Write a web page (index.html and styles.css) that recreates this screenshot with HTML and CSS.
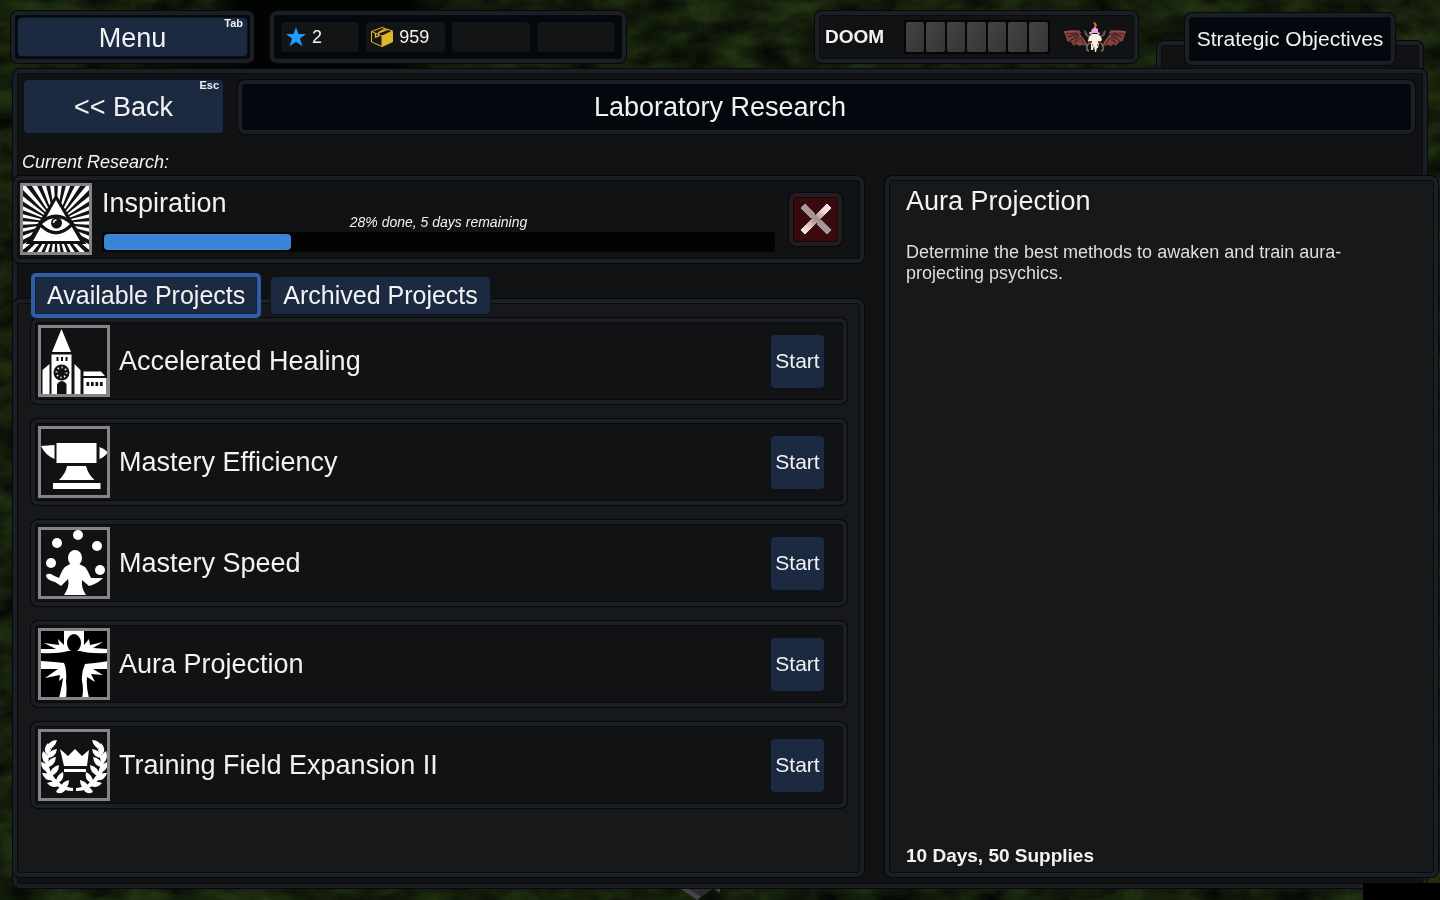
FILE: index.html
```html
<!DOCTYPE html>
<html lang="en">
<head>
<meta charset="utf-8">
<title>Laboratory Research</title>
<link rel="stylesheet" href="styles.css">
</head>
<body>
<svg class="terrain" aria-hidden="true">
  <filter id="moss" x="0" y="0" width="100%" height="100%" color-interpolation-filters="sRGB">
    <feTurbulence type="fractalNoise" baseFrequency="0.025 0.045" numOctaves="6" seed="8"/>
    <feColorMatrix values="0.18 0 0 0 -0.010  0.26 0.04 0 0 -0.030  0.08 0 0 0 0.005  0 0 0 0 1"/>
  </filter>
  <rect width="100%" height="100%" filter="url(#moss)"/>
</svg>
<div class="shade"></div>
<div class="map-corner"></div>
<svg class="map-arrow" viewBox="0 0 40 12" aria-hidden="true"><path d="M0 0h34L17 12z" fill="#2c2c2e"/><path d="M0 0l17 12 4-3L8 0zM33 0h7v5z" fill="#444448"/></svg>

<div class="screen">
  <header class="topbar">
    <nav class="panel deep menu"><button class="btn menu-btn">Menu<kbd>Tab</kbd></button></nav>
    <ul class="panel deep resources">
      <li><svg class="star" viewBox="0 0 20 20"><path d="M10 0l2.400 7H20l-6 4.600 2.300 7.700-6.300-4.600-6.300 4.600L6 11.600 0 7h7.600z" fill="#1e9bff"/></svg>2</li>
      <li><svg class="crate" viewBox="0 0 22 20"><path d="M11 9l11-5v11l-11 5z" fill="#e0b72a"/><path d="M.5 4.500L11 .5l10.500 3.500L11 9zM.5 4.500v10.500l10.500 4.500V9" fill="#151617" stroke="#e0b72a"/><path d="M4.500 6v4l3-1V6L17 2.500M7.500 5.500L14 2" fill="none" stroke="#e0b72a" stroke-width="1.300"/></svg>959</li>
      <li></li>
      <li></li>
    </ul>
    <section class="panel doom">
      <strong>DOOM</strong>
      <div class="segments"><i></i><i></i><i></i><i></i><i></i><i></i><i></i></div>
      <svg class="demon" viewBox="0 0 62 32" aria-hidden="true">
        <g id="wing"><path d="M0 11l6-1 6 0 5 1-1 3 4 5 3 6-5-1-3 1-3-2-2 2-3-4-4-1-1-4z" fill="#81443f"/><path d="M2 13l11-1-9 4 11-3-9 7 9-5-5 7 7-5 3 6" fill="none" stroke="#3b191a" stroke-width=".8"/><path d="M0 11l6-1h10M16 14l4 5 3 5" fill="none" stroke="#a85b54"/><path d="M20 9l1 5 4 3 3-2-4-1-2-4z" fill="#665347"/><path d="M25 22l-2 3 0 4 2 1" fill="none" stroke="#777064" stroke-width="1.600"/></g>
        <use href="#wing" transform="matrix(-1 0 0 1 62 0)"/>
        <path d="M25 16l3-3h6l3 3 1 3-3 3-1 5h-1l-1 4h-1l-1-6-1 4h-2v-6l-3-3z" fill="#f4f0e3"/>
        <path d="M28 23l1 0 0 3zM33 23h1l-1 3z" fill="#5b4742"/>
        <path d="M25 20h3v2h-3zM34 20h3v2h-3z" fill="#b81822"/>
        <path d="M25 11l2 0 1-3 2-1 1-3 1 3 2 1 0 3 2 1-1 2-2-2h-4l-3 2z" fill="#efa8df"/>
        <path d="M29 2l2-1 1 2 1 1-1 2-1-1-1-2z" fill="#ef6d28"/>
      </svg>
    </section>
    <div class="panel drawer"><button class="panel deep objectives">Strategic Objectives</button></div>
  </header>

  <main class="panel lab">
    <div class="heading">
      <button class="btn back-btn">&lt;&lt; Back<kbd>Esc</kbd></button>
      <h1 class="panel deep">Laboratory Research</h1>
    </div>
    <p class="caption">Current Research:</p>

    <div class="columns">
      <div class="left">
        <section class="panel current">
          <svg class="icon" viewBox="0 0 66 66" aria-hidden="true">
            <circle cx="33" cy="37" r="30" pathLength="60" fill="none" stroke="#fff" stroke-width="60" stroke-dasharray="1 1" stroke-dashoffset=".5"/>
            <path d="M33 14L8 55h50z" fill="#101214" stroke="#101214" stroke-width="6"/>
            <path d="M33 14L10 55h47z" fill="#fff"/>
            <path d="M17 38q16-15 32 0q-16 17-32 0z" fill="#fff" stroke="#101214" stroke-width="4"/>
            <path d="M19 38q14-12 28 0q-14 14-28 0z" fill="#fff"/>
            <circle cx="33.500" cy="37" r="5.500" fill="#101214"/><path d="M30.500 37q0-3 3-3" fill="none" stroke="#fff" stroke-width="1.300"/>
          </svg>
          <div class="status">
            <h2>Inspiration</h2>
            <label for="research-progress">28% done, 5 days remaining</label>
            <progress id="research-progress" value="28" max="100"></progress>
          </div>
          <button class="panel cancel" aria-label="Cancel research">
            <svg viewBox="0 0 34 34"><defs><linearGradient id="shine" x1="1" y1="0" x2="0" y2="1"><stop offset="0" stop-color="#ffe8e6"/><stop offset=".25" stop-color="#f3d9d7"/><stop offset=".5" stop-color="#a08b8b"/><stop offset=".75" stop-color="#ecd0ce"/><stop offset="1" stop-color="#fff0ee"/></linearGradient></defs><path d="M6 1l-5 5 27 27 5-5z" fill="#aa9697" stroke="#2b1d1f"/><path d="M28 1l5 5L6 33l-5-5z" fill="url(#shine)" stroke="#2b1d1f"/><path d="M14 11l9 9-3 3-9-9z" fill="#a69293"/></svg>
          </button>
        </section>

        <div class="tabs">
          <button class="btn tab selected">Available Projects</button>
          <button class="btn tab">Archived Projects</button>
        </div>

        <ul class="panel projects">
          <li class="panel">
            <svg class="icon" viewBox="0 0 66 66" aria-hidden="true"><g fill="#fff"><path d="M20.500 1L11 24h19zM10.500 26.500h20V66h-20zM1.500 66V42l7-6v30zM33.500 36l6 6v24h-6zM42.500 43.500H60l4 4.500H42.500zM42.500 50h23v16h-23z"/></g><g fill="#101214"><path d="M15.500 29h2v4h-2zM20 29h2v4h-2zM24.500 29h2v4h-2zM16 66V56q5-6 9.500 0v10zM45.500 54h2.700v4h-2.700zM50 54h2.700v4H50zM54.500 54h2.700v4h-2.700zM59 54h2.700v4H59z"/><circle cx="20.500" cy="44.500" r="8"/></g><circle cx="20.500" cy="44.500" r="5" fill="none" stroke="#fff" stroke-width="2" pathLength="16" stroke-dasharray=".6 1.400"/></svg>
            <h3>Accelerated Healing</h3><button class="btn start">Start</button>
          </li>
          <li class="panel">
            <svg class="icon" viewBox="0 0 66 66" aria-hidden="true"><path d="M0 17l13.500-1v14Q4 26 0 17zM15.500 14h40v20h-40zM58.500 18q6 2 8 5.500-3 5-8 6.500zM26 37h19q2 8 8.500 14H18q7-7 8-14zM12 54h47.500v6H12z" fill="#fff"/></svg>
            <h3>Mastery Efficiency</h3><button class="btn start">Start</button>
          </li>
          <li class="panel">
            <svg class="icon" viewBox="0 0 66 66" aria-hidden="true"><g fill="#fff"><circle cx="37" cy="5" r="5"/><circle cx="16" cy="13" r="5"/><circle cx="56" cy="16" r="5"/><circle cx="10" cy="33" r="5"/><circle cx="59" cy="40" r="5"/><ellipse cx="34" cy="28" rx="7" ry="8"/><path d="M29 34l-5 3q-3 3-6 11-5-2-8-4-5-1-5 2 1 4 9 6l6 4 7-7q2 7-4 16h22q-5-7-4-15l7 6q8-2 14-8l-12 0q-4-9-6-11l-6-3z"/></g></svg>
            <h3>Mastery Speed</h3><button class="btn start">Start</button>
          </li>
          <li class="panel">
            <svg class="icon" viewBox="0 0 66 66" aria-hidden="true"><path d="M0 0h66v66H0z" fill="#000"/><path d="M23 0h20v14l5-6 1 6 13-3-10 6 15 1v20H52l10 6-12-1 4 8-8-5q-1 10 2 21H18q3-12 4-20l-4 3 1-6-15 3 13-9H0V18l15 0L3 12l15 2-1-6 6 6z" fill="#fff"/><ellipse cx="33" cy="12" rx="7" ry="9"/><path d="M0 22q16 1 27-2h12q11 3 28 2v8q-14 2-23 3-4 9-3 17 2 9 0 17H25q1-9 0-16 1-12-2-19Q15 31 0 30z"/></svg>
            <h3>Aura Projection</h3><button class="btn start">Start</button>
          </li>
          <li class="panel">
            <svg class="icon" viewBox="0 0 66 66" aria-hidden="true"><g fill="#fff"><path d="M19 17l8 7 7-7 7 7 7-6-2 16H23zM23 37h22v3H23z"/><g id="laurel"><path d="M13 12Q-1 36 20 52q4 3 12 4v3q-10 0-16-5Q-6 36 13 12z"/><path d="M16 8q-8 0-11 9 9 0 11-9zM7 11q-6 6-1 12 6-6 1-12zM16 17q-8 1-11 9 10 0 11-9zM2 19q-3 9 4 13 4-7-4-13zM15 25q-8 1-10 10 9 0 10-10zM0 30q0 9 9 11 0-9-9-11zM18 33q-9 2-9 11 9-2 9-11zM1 41q3 9 12 7-3-8-12-7zM22 40q-8 4-7 12 9-3 7-12zM6 51q6 7 13 2-4-6-13-2zM28 48q-9 2-8 10 8-1 8-10zM15 60q7 4 11-5-9-1-11 5z"/></g><use href="#laurel" transform="matrix(-1 0 0 1 67 0)"/></g></svg>
            <h3>Training Field Expansion II</h3><button class="btn start">Start</button>
          </li>
        </ul>
      </div>

      <aside class="panel details">
        <h2>Aura Projection</h2>
        <p>Determine the best methods to awaken and train aura-projecting psychics.</p>
        <strong>10 Days, 50 Supplies</strong>
      </aside>
    </div>
  </main>
</div>
</body>
</html>
```
FILE: styles.css
```css
* { box-sizing: border-box; }

body {
  margin: 0;
  background: #12200b;
  color: #f2f2f2;
  font-family: "Liberation Sans", Arial, sans-serif;
}

h1, h2, h3, p, ul { margin: 0; padding: 0; font-weight: normal; }
ul { list-style: none; }
h1, h2, h3 { font-size: 27px; line-height: 32px; }
button { font: inherit; color: inherit; padding: 0; cursor: pointer; }
svg { display: block; flex: none; }

/* Scenery behind the interface */
.terrain, .shade { position: fixed; inset: 0; width: 100%; height: 100%; z-index: -2; }
.shade {
  z-index: -1;
  background:
    radial-gradient(ellipse 120px 100px at 325px 20px, #020402 75%, transparent),
    radial-gradient(ellipse 200px 30px at 260px 66px, #020402d0 30%, transparent);
}
.map-corner { position: fixed; right: 0; bottom: 0; width: 77px; height: 17px; background: #000; z-index: 5; }
.map-arrow { position: fixed; left: 680px; bottom: 0; width: 40px; height: 12px; z-index: -1; }

/* Shared parts */
.panel {
  border: 4px solid #1b1e25;
  border-radius: 7px;
  background: #111214;
  box-shadow: 0 0 0 1px #06080b, inset 0 0 0 1px #090b0d;
}
.deep { background: #05070e; }

.btn {
  position: relative;
  border: 0;
  border-radius: 4px;
  background: #1c2a41;
  box-shadow: 0 0 0 1px #0b1220;
  font-size: 27px;
}
.btn kbd {
  position: absolute;
  top: -1px;
  right: 4px;
  font: bold 11px/12px "Liberation Sans", Arial, sans-serif;
}
.icon { width: 72px; height: 72px; border: 3px solid #858585; background: #101214; }

.screen { display: flex; flex-direction: column; min-height: 100vh; padding-bottom: 12px; }

/* Top bar */
.topbar { display: flex; align-items: flex-start; height: 69px; padding: 11px 17px 0 11px; }
.menu { width: 243px; padding: 3px; }
.menu-btn { display: block; width: 100%; height: 38px; padding-top: 2px; }
.resources { display: flex; gap: 7px; width: 356px; height: 52px; margin-left: 16px; padding: 7px; }
.resources li {
  display: flex;
  flex: 1;
  align-items: center;
  gap: 6px;
  height: 30px;
  padding-left: 5px;
  border-radius: 4px;
  background: #131415;
  font-size: 18px;
}
.star { width: 20px; height: 20px; }
.crate { width: 22px; height: 20px; }
.doom {
  display: flex;
  align-items: center;
  justify-content: space-between;
  width: 323px;
  height: 52px;
  margin-left: auto;
  padding: 0 8px 0 6px;
}
.doom strong { font-size: 19px; }
.segments { display: flex; gap: 2px; width: 146px; height: 34px; margin-left: 5px; padding: 2px; background: #060606; }
.segments i { flex: 1; border-radius: 2px; background: linear-gradient(120deg, #444, #353535); }
.demon { width: 62px; height: 32px; }
.drawer {
  width: 266px;
  height: 40px;
  margin: 30px 0 0 19px;
  padding: 0 24px;
}
.objectives { display: block; width: 100%; height: 52px; margin-top: -32px; font-size: 21px; white-space: nowrap; }

/* Research screen */
.lab {
  position: relative;
  display: flex;
  flex: 1;
  flex-direction: column;
  margin: 0 13px;
  padding-bottom: 7px;
}
.heading { display: flex; gap: 15px; padding: 7px 8px 0 7px; }
.back-btn { width: 199px; height: 53px; padding-top: 2px; }
.heading h1 {
  flex: 1;
  height: 54px;
  padding-right: 213px;
  line-height: 46px;
  text-align: center;
}
.caption { margin: 18px 0 3px 5px; font-size: 18px; line-height: 21px; font-style: italic; }
.columns {
  display: grid;
  flex: 1;
  grid-template-columns: 851fr 553fr;
  gap: 21px;
  margin: 0 -15px 0 -4px;
}
.left { display: flex; flex-direction: column; }
.current { display: flex; align-items: center; gap: 10px; padding: 3px 18px 4px 3px; }
.status { display: flex; flex: 1; flex-direction: column; }
.status h2 { height: 28px; line-height: 34px; }
.status label { font-size: 14px; line-height: 16px; font-style: italic; text-align: center; }
.status progress {
  appearance: none;
  width: 100%;
  height: 20px;
  margin-top: 2px;
  border: 2px solid #030303;
  border-radius: 4px;
  background: #030303;
}
.status progress::-webkit-progress-bar { background: #030303; }
.status progress::-webkit-progress-value { border-radius: 4px; background: #3b85d6; }
.cancel {
  display: grid;
  place-items: center;
  width: 53px;
  height: 53px;
  margin-left: 4px;
  border-color: #251b21;
  background: #3a090b;
}
.cancel svg { width: 34px; height: 34px; }

.tabs { position: relative; z-index: 1; display: flex; align-items: center; gap: 10px; margin: 10px 0 -19px 18px; }
.tab { height: 37px; padding: 0 12px; font-size: 25px; white-space: nowrap; }
.tab.selected { height: 45px; border: 4px solid #2f5da8; border-radius: 5px; box-shadow: inset 0 0 0 1px #14213a; }

.projects {
  display: flex;
  flex: 1;
  flex-direction: column;
  gap: 15px;
  padding: 15px 13px 15px 14px;
  background: #17181a;
}
.projects li { display: flex; align-items: center; gap: 9px; height: 86px; padding: 0 19px 0 3px; }
.projects h3 { flex: 1; }
.start { width: 53px; height: 53px; font-size: 21px; }

.details { display: flex; flex-direction: column; padding: 5px 24px 6px 17px; background: #17181a; }
.details p { margin-top: 25px; padding-right: 40px; font-size: 18px; line-height: 21px; color: #dedede; }
.details strong { margin-top: auto; font-size: 19px; line-height: 22px; }
```
